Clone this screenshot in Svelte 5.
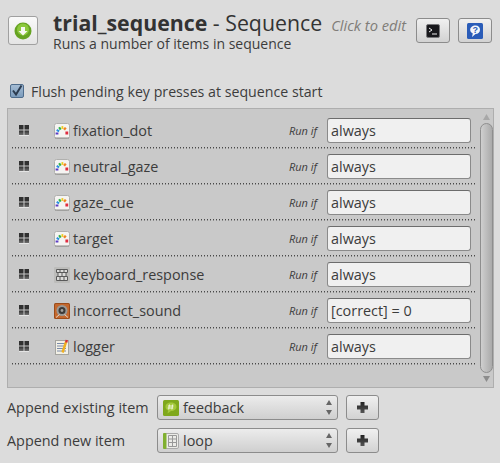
<script lang="ts">
	const items = [
		{ name: 'fixation_dot', icon: 'sketch', cond: 'always' },
		{ name: 'neutral_gaze', icon: 'sketch', cond: 'always' },
		{ name: 'gaze_cue', icon: 'sketch', cond: 'always' },
		{ name: 'target', icon: 'sketch', cond: 'always' },
		{ name: 'keyboard_response', icon: 'keyboard', cond: 'always' },
		{ name: 'incorrect_sound', icon: 'sound', cond: '[correct] = 0' },
		{ name: 'logger', icon: 'logger', cond: 'always' }
	];
	const appends = [
		{ label: 'Append existing item', value: 'feedback', icon: 'feedback' },
		{ label: 'Append new item', value: 'loop', icon: 'loop' }
	];
</script>

{#snippet itemIcon(kind)}
	<svg class="item-icon" width="16" height="16" viewBox="0 0 16 16">
		{#if kind === 'sketch'}
			<rect x="0.5" y="0.5" width="15" height="15" rx="2" fill="#f5f4f2" stroke="#b0b0ae" />
			<path d="M1 15h14" stroke="#8f8f8d" />
			<path d="M3 11.500V9.500" stroke="#5a3cc4" stroke-width="2.8" fill="none" />
			<path d="M3.400 8.500l1-1.800" stroke="#2a8fe0" stroke-width="2.8" fill="none" />
			<path d="M5 6l1.800-1.200" stroke="#2fb24a" stroke-width="2.8" fill="none" />
			<path d="M7.500 4.500h1.800" stroke="#eccc1e" stroke-width="2.8" fill="none" />
			<path d="M10 5l1.800 1.400" stroke="#f08420" stroke-width="2.8" fill="none" />
			<path d="M12.800 8.500v3" stroke="#e02c40" stroke-width="2.8" fill="none" />
		{:else if kind === 'keyboard'}
			<rect x="0" y="0" width="16" height="16" rx="1" fill="#bcbcba" />
			<path d="M2.500 2.500h11v3h-11zM4 5.500h8v4H4zM2.500 9.500h11v4h-11zM6 2.500v3M10 2.500v3M8 5.500v4M6 9.500v4M10 9.500v4" fill="#dcdcda" stroke="#5a5a5a" stroke-width="1" />
		{:else if kind === 'sound'}
			<rect x="0" y="0" width="16" height="16" rx="1.500" fill="#9c4c1a" />
			<rect x="1" y="1" width="14" height="14" rx="1" fill="#c4682e" />
			<circle cx="8" cy="7.500" r="5.500" fill="#9a9894" />
			<circle cx="8" cy="7.500" r="3.500" fill="#3c3a38" />
			<circle cx="8" cy="7.500" r="1.400" fill="#a4a29e" />
			<path d="M2 14.500l3.500-3M14 14.500l-3.500-3" stroke="#e8d8c8" stroke-width="1" />
		{:else}
			<rect x="1.500" y="1.500" width="13" height="14" fill="#f2f0e6" stroke="#a5a5a0" />
			<path d="M3 4.500h9M3 7h9M3 9.500h9M3 12h9" stroke="#7a8aa8" stroke-width="1" />
			<path d="M8.500 13.500L12 3" stroke="#f0b020" stroke-width="2.400" />
			<path d="M12.200 3.500l.6-2.500" stroke="#d83030" stroke-width="2.400" />
		{/if}
	</svg>
{/snippet}

{#snippet grip()}
	<svg class="grip" width="11" height="12" viewBox="0 0 11 12">
		<defs>
			<linearGradient id="gripfill" x1="0" y1="0" x2="0" y2="1">
				<stop offset="0" stop-color="#303030" />
				<stop offset="1" stop-color="#707070" />
			</linearGradient>
		</defs>
		<rect x="0" y="0" width="4.500" height="4.500" fill="#303030" />
		<rect x="5.500" y="0" width="4.500" height="4.500" fill="#303030" />
		<rect x="0" y="5.500" width="4.500" height="4.500" fill="url(#gripfill)" />
		<rect x="5.500" y="5.500" width="4.500" height="4.500" fill="url(#gripfill)" />
		<path d="M0 10.500h10" stroke="#e4e4e4" stroke-width="1" />
	</svg>
{/snippet}

{#snippet plus()}
	<svg width="11" height="11" viewBox="0 0 11 11">
		<defs>
			<linearGradient id="plusfill" x1="0" y1="0" x2="0" y2="1">
				<stop offset="0" stop-color="#222" />
				<stop offset="1" stop-color="#555" />
			</linearGradient>
		</defs>
		<path d="M3.500 0h4v3.500H11v4H7.500V11h-4V7.500H0v-4h3.500z" fill="url(#plusfill)" />
	</svg>
{/snippet}

{#snippet spinArrows()}
	<span class="arrows">
		<svg width="6" height="5" viewBox="0 0 6 5"><path d="M3 0l3 5H0z" fill="#666" /></svg>
		<svg width="6" height="5" viewBox="0 0 6 5"><path d="M0 0h6L3 5z" fill="#666" /></svg>
	</span>
{/snippet}

<div class="window">
	<header class="head">
		<button class="run-btn" aria-label="Collapse">
			<svg width="18" height="18" viewBox="0 0 18 18">
				<circle cx="9" cy="9" r="8.500" fill="#66a322" />
				<circle cx="9" cy="7.500" r="6" fill="#8cc83c" />
				<path d="M7 5h4v4h2.500L9 13.500 4.500 9H7z" fill="#f6f8f0" />
			</svg>
		</button>
		<div class="titles">
			<div class="title-line">
				<span class="title"><b>trial_sequence</b> - Sequence</span>
				<span class="edit">Click to edit</span>
			</div>
			<div class="desc">Runs a number of items in sequence</div>
		</div>
		<button class="tool-btn" aria-label="Script">
			<svg width="14" height="14" viewBox="0 0 14 14">
				<rect x="0.500" y="0.500" width="13" height="13" rx="1.500" fill="#18181c" stroke="#77777a" />
				<path d="M3 4l3 2-3 2" stroke="#eee" fill="none" />
				<path d="M6 10h5" stroke="#eee" />
			</svg>
		</button>
		<button class="tool-btn" aria-label="Help">
			<svg width="16" height="16" viewBox="0 0 16 16">
				<rect x="0" y="0" width="16" height="16" rx="1.500" fill="#2a5cb8" />
				<path d="M8.500 2.500c2.800 0 4.500 1.900 4.500 4.300s-1.800 4.300-4.500 4.300L5 14l.8-3.500C4.200 9.700 3.200 8.400 3.200 6.800c0-2.400 2.300-4.300 5.300-4.300z" fill="#f4f6fa" />
				<text x="8.300" y="10.300" text-anchor="middle" class="qmark">?</text>
			</svg>
		</button>
	</header>

	<label class="flush">
		<span class="check">
			<svg width="12" height="12" viewBox="0 0 12 12">
				<path d="M2 5.500l3 4L10.500 0.500" stroke="#2c3c50" stroke-width="2" fill="none" />
			</svg>
		</span>
		Flush pending key presses at sequence start
	</label>

	<div class="panel">
		<div class="rows">
			{#each items as item}
				<div class="row">
					<span class="grip-cell">{@render grip()}</span>
					{@render itemIcon(item.icon)}
					<span class="name">{item.name}</span>
					<span class="runif">Run if</span>
					<div class="cond">{item.cond}</div>
				</div>
			{/each}
		</div>
		<div class="scroll">
			<svg class="stepper" width="7" height="6" viewBox="0 0 7 6"><path d="M3.500 0L7 6H0z" fill="#a8a8a8" /></svg>
			<div class="thumb"></div>
			<svg class="stepper" width="7" height="6" viewBox="0 0 7 6"><path d="M0 0h7L3.500 6z" fill="#8c8c8c" /></svg>
		</div>
	</div>

	<div class="append-grid">
		{#each appends as a}
			<span class="append-label">{a.label}</span>
			<div class="combo">
				{#if a.icon === 'feedback'}
					<svg width="16" height="16" viewBox="0 0 16 16">
						<rect width="16" height="16" rx="1.500" fill="#7fa81c" />
						<path d="M8 2.500c3.300 0 5.500 1.800 5.500 4.300S11.300 11 8 11l-3.500 2.500.6-3C3.400 9.800 2.500 8.500 2.500 6.800 2.500 4.300 4.700 2.500 8 2.500z" fill="#a4c83c" />
						<path d="M6.500 4.500l-.8 5M9.700 4.500l-.8 5M5 6h5.500M4.700 8h5.500" stroke="#eef4d8" fill="none" />
					</svg>
				{:else}
					<svg width="16" height="16" viewBox="0 0 16 16">
						<rect x="0.500" y="0.500" width="15" height="15" rx="1.500" fill="#ecece8" stroke="#aaa" />
						<rect width="3.500" height="16" rx="1" fill="#80b030" />
						<path d="M5.500 2.500h8v11h-8zM5.500 6h8M5.500 9.500h8M9.500 2.500v11" stroke="#999" fill="none" />
					</svg>
				{/if}
				<span class="combo-text">{a.value}</span>
				{@render spinArrows()}
			</div>
			<button class="plus-btn" aria-label="Add">{@render plus()}</button>
		{/each}
	</div>
</div>

<style>
	:global(body) {
		background: #dcdcdc;
	}

	.window {
		width: 500px;
		height: 463px;
		box-sizing: border-box;
		font-family: 'Open Sans', 'Noto Sans', sans-serif;
		color: #3c3c3c;
		overflow: hidden;
	}

	button {
		padding: 0;
		display: flex;
		align-items: center;
		justify-content: center;
		border: 1px solid #8c8c8c;
		border-radius: 3px;
		background: linear-gradient(#f0f0f0, #d2d2d2);
	}

	.head {
		display: flex;
		align-items: flex-start;
		padding: 10px 8px 0 8px;
		height: 69px;
		box-sizing: border-box;
	}

	.run-btn {
		width: 30px;
		height: 29px;
		margin-top: 6px;
		background: linear-gradient(#fafafa, #e4e4e4);
		border-color: #a0a0a0;
		flex: none;
	}

	.titles {
		flex: 1;
		margin-left: 15px;
		min-width: 0;
	}

	.title-line {
		display: flex;
		align-items: baseline;
		white-space: nowrap;
		height: 25px;
	}

	.title {
		font-size: 21.3px;
		line-height: 25px;
		color: #333;
	}

	.title b {
		font-weight: 700;
	}

	.edit {
		font-size: 14.7px;
		line-height: 18px;
		font-style: italic;
		color: #807c78;
		margin-left: 9px;
	}

	.desc {
		font-size: 14px;
		line-height: 17px;
		color: #3c3c3c;
	}

	.tool-btn {
		width: 34px;
		height: 25px;
		margin-top: 8px;
		margin-left: 8px;
		flex: none;
	}

	.qmark {
		font-family: 'Liberation Sans', sans-serif;
		font-size: 9px;
		font-weight: 700;
		fill: #2a5cb8;
	}

	.flush {
		display: flex;
		align-items: center;
		gap: 7px;
		padding-left: 10px;
		height: 20px;
		margin-top: 12px;
		font-size: 14.2px;
	}

	.check {
		width: 14px;
		height: 14px;
		box-sizing: border-box;
		border: 1px solid #4e6c8c;
		border-radius: 2px;
		background: linear-gradient(#a4bcd4, #7c9cbc);
		display: flex;
		flex: none;
	}

	.panel {
		display: flex;
		margin: 7px 6px 0 7px;
		height: 280px;
		box-sizing: border-box;
		border: 1px solid #aeaeae;
		background: #c9c9c9;
	}

	.rows {
		flex: 1;
		padding-top: 4px;
		min-width: 0;
	}

	.row {
		display: flex;
		align-items: center;
		height: 36px;
		box-sizing: border-box;
		padding: 0 0 1px 7px;
		margin: 0 4px;
		background-image:
			repeating-linear-gradient(90deg, #4a4a4a 0 1px, transparent 1px 3px),
			repeating-linear-gradient(90deg, #8e8e8e 0 1px, transparent 1px 3px);
		background-size: 100% 1px;
		background-position: 0 34px, 0 35px;
		background-repeat: no-repeat;
	}

	.grip-cell {
		width: 35px;
		display: flex;
		flex: none;
	}

	.item-icon {
		flex: none;
	}

	.name {
		flex: 1;
		margin-left: 3px;
		font-size: 14.4px;
		color: #3c3c3c;
	}

	.runif {
		font-size: 11px;
		font-style: italic;
		margin-right: 10px;
		color: #3c3c3c;
	}

	.cond {
		width: 144px;
		height: 25px;
		box-sizing: border-box;
		border: 1px solid #8a8a8a;
		border-top-color: #6c6c6c;
		border-radius: 3px;
		background: #f0f0f0;
		font-size: 14.4px;
		line-height: 23px;
		padding-left: 3px;
		margin-right: 4px;
		flex: none;
	}

	.scroll {
		width: 14px;
		flex: none;
		display: flex;
		flex-direction: column;
		align-items: center;
		padding: 5px 0;
		box-sizing: border-box;
	}

	.stepper {
		flex: none;
	}

	.thumb {
		flex: 1;
		width: 13px;
		margin: 3px 0;
		box-sizing: border-box;
		border: 1px solid #8e8e8e;
		border-radius: 7px;
		background: linear-gradient(90deg, #cfcfcf, #aaa);
	}

	.append-grid {
		display: grid;
		grid-template-columns: 142px 181px 33px;
		column-gap: 8px;
		row-gap: 8px;
		align-items: center;
		padding: 7px 0 0 7px;
	}

	.append-label {
		font-size: 14.4px;
		white-space: nowrap;
	}

	.combo {
		height: 25px;
		box-sizing: border-box;
		border: 1px solid #8c8c8c;
		border-radius: 3px;
		background: linear-gradient(#ececec, #cfcfcf);
		display: flex;
		align-items: center;
		padding: 0 5px;
	}

	.combo-text {
		flex: 1;
		margin-left: 4px;
		font-size: 14.4px;
	}

	.arrows {
		display: flex;
		flex-direction: column;
		gap: 5px;
	}

	.arrows svg {
		display: block;
	}

	.plus-btn {
		width: 33px;
		height: 25px;
	}
</style>
